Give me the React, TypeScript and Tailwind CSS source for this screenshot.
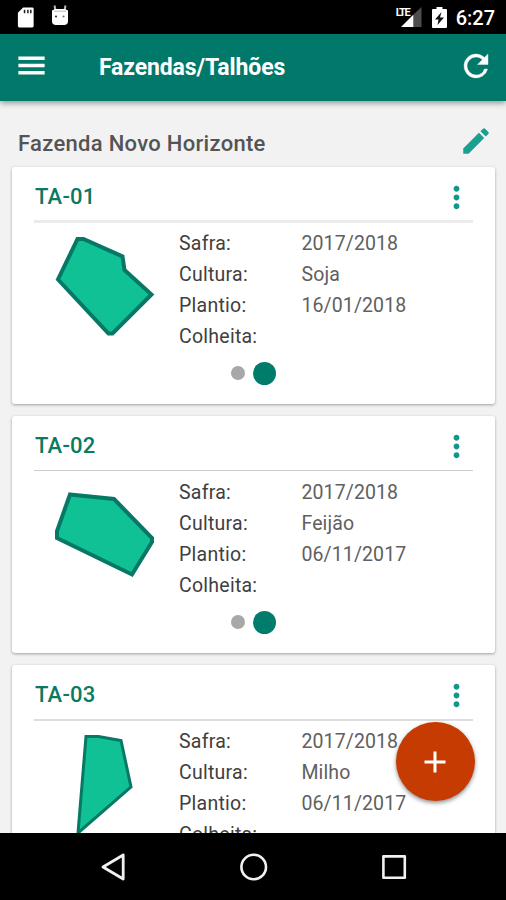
import { MdAdd, MdEdit, MdMoreVert } from 'react-icons/md';

interface Field {
  name: string;
  crop: string;
  planted: string;
  shape: string;
  strokeWidth: number;
  divider: string;
}

const fields: Field[] = [
  {
    name: 'TA-01',
    crop: 'Soja',
    planted: '16/01/2018',
    shape: '43.5,16 49.5,16 88.5,33.5 90.5,47 117.5,71.5 78.5,110.5 74.5,110.5 24,56.5',
    strokeWidth: 4,
    divider: 'h-[3px] bg-[#ebebeb]'
  },
  {
    name: 'TA-02',
    crop: 'Feijão',
    planted: '06/11/2017',
    shape: '36,22.5 80,27 118,66 118,70 98,102.5 23,66 23,59',
    strokeWidth: 4,
    divider: 'mt-px mb-px h-px bg-[#cdcdcd]'
  },
  {
    name: 'TA-03',
    crop: 'Milho',
    planted: '06/11/2017',
    shape: '52,15.5 64.5,15.5 87,19.5 97,66 44,112',
    strokeWidth: 3,
    divider: 'mt-px h-0.5 bg-[#dedede]'
  }
];

function StatusBar() {
  return (
    <div className="flex h-[34px] shrink-0 items-center bg-black pl-[17px] pr-[11px] text-white">
      <svg className="mt-px" width="18" height="21" viewBox="0 0 18 22">
        <path d="M6 .5h9.5a1.5 1.5 0 0 1 1.5 1.5v18a1.5 1.5 0 0 1-1.5 1.5H2A1.5 1.5 0 0 1 .5 20V6z" fill="#fff" />
        <path d="M7.5 3v3.5M11 3v3.5M14 3v3.5" stroke="#222" strokeWidth="1.6" />
      </svg>
      <svg className="-mt-[3px] ml-4" width="18" height="21" viewBox="0 0 18 21">
        <path d="M3.5 0.5l1 5M14.5 .5l-1 5" stroke="#bbb" strokeWidth="2" />
        <path d="M1 5.5L4 4h10l3 1.5V16a4 4 0 0 1-4 4H5a4 4 0 0 1-4-4z" fill="#fff" />
        <path d="M3 6.2h12" stroke="#bbb" strokeWidth="1" />
        <circle cx="5" cy="11.5" r="1.1" fill="#333" />
        <circle cx="12.5" cy="11.5" r="1.1" fill="#777" />
      </svg>
      <div className="flex-1" />
      <div className="relative h-5 w-[27px]">
        <svg className="absolute bottom-0 right-0" width="22" height="20" viewBox="0 0 22 20">
          <path d="M14 7L21.5 0v20H14z" fill="#4d4d4d" />
          <path d="M1 20L13.5 7.5V20z" fill="#fff" />
        </svg>
        <span className="absolute left-px top-px text-[11px] font-bold leading-[9px] tracking-[-1.3px]">LTE</span>
      </div>
      <svg className="ml-2.5" width="15" height="21" viewBox="0 0 15 21">
        <path d="M4.5 0h6v2H14a1 1 0 0 1 1 1v17a1 1 0 0 1-1 1H1a1 1 0 0 1-1-1V3a1 1 0 0 1 1-1h3.5z" fill="#fff" />
        <path d="M9.5 5L3 12.5h3.5L5.5 18l6.5-7.5H8z" fill="#111" />
      </svg>
      <span className="ml-[9px] mt-0.5 text-[20px] font-medium">6:27</span>
    </div>
  );
}

function AppBar() {
  return (
    <header className="z-10 flex h-[67px] shrink-0 items-center bg-[#00796b] pb-1 pl-[14px] pr-[12px] text-white shadow-[0_2px_6px_rgba(0,0,0,0.4)]">
      <svg width="35" height="35" viewBox="0 0 24 24" fill="none" stroke="currentColor" strokeWidth="2.3">
        <path d="M3 7h18M3 12h18M3 17h18" />
      </svg>
      <h1 className="ml-[50px] mt-1.5 flex-1 text-[23px] font-bold tracking-[-0.12px]">Fazendas/Talhões</h1>
      <svg width="36" height="36" viewBox="0 0 24 24" fill="currentColor" stroke="currentColor" strokeWidth="0.25">
        <path d="M17.65 6.35A7.958 7.958 0 0 0 12 4a8 8 0 1 0 7.73 10h-2.08A5.99 5.99 0 0 1 12 18a6 6 0 1 1 0-12c1.66 0 3.14.69 4.22 1.78L13 11h7V4z" />
      </svg>
    </header>
  );
}

function FieldCard({ field }: { field: Field }) {
  const rows = [
    { label: 'Safra:', value: '2017/2018' },
    { label: 'Cultura:', value: field.crop },
    { label: 'Plantio:', value: field.planted },
    { label: 'Colheita:', value: '' }
  ];

  return (
    <article className="h-[237px] shrink-0 rounded-[3px] bg-white px-[22px] shadow-[0_1px_3px_rgba(0,0,0,0.35)]">
      <div className="flex h-[53px] items-center justify-between pt-[7px]">
        <h3 className="-mt-px ml-px text-[22px] font-medium tracking-[0.2px] text-[#0b7a62]">{field.name}</h3>
        <MdMoreVert size={35} className="-mr-px text-[#12988a]" />
      </div>
      <div className={field.divider} />

      <div className="flex">
        <svg className="mt-0.5 h-[118px] w-[145px]" viewBox="0 2 145 118">
          <polygon points={field.shape} fill="#10c196" stroke="#067865" strokeWidth={field.strokeWidth} />
        </svg>
        <dl className="pt-[4.5px] text-[19.5px] leading-[31px]">
          {rows.map((row) => (
            <div key={row.label} className="flex">
              <dt className="w-[122.5px] tracking-[0.25px] text-[#404040]">{row.label}</dt>
              <dd className="tracking-[0.1px] text-[#606060]">{row.value}</dd>
            </div>
          ))}
        </dl>
      </div>

      {/* Pager */}
      <div className="mt-2.5 flex items-center justify-center gap-2">
        <span className="size-[14px] rounded-full bg-[#a8a8a8]" />
        <span className="size-[23px] rounded-full bg-[#007c6c]" />
      </div>
    </article>
  );
}

function NavigationBar() {
  return (
    <nav className="flex h-[67px] shrink-0 items-center bg-black pl-[99px]">
      <svg width="28" height="30" viewBox="0 0 28 30" fill="none" stroke="#f1f1f1" strokeWidth="2.8" strokeLinejoin="round">
        <path d="M24.2 3L4 15l20.2 12z" />
      </svg>
      <svg className="ml-[112px]" width="30" height="30" viewBox="0 0 30 30" fill="none" stroke="#f1f1f1" strokeWidth="2.6">
        <circle cx="14.7" cy="15" r="12.3" />
      </svg>
      <svg className="ml-[110px]" width="30" height="30" viewBox="0 0 30 30" fill="none" stroke="#f1f1f1" strokeWidth="2.6" strokeLinejoin="round">
        <rect x="4.4" y="4.4" width="21.4" height="21.4" />
      </svg>
    </nav>
  );
}

export default function App() {
  return (
    <div className="relative flex h-[900px] w-[506px] flex-col overflow-hidden bg-[#f2f2f2] font-['Roboto',sans-serif]">
      <StatusBar />
      <AppBar />

      <main className="flex min-h-0 flex-1 flex-col overflow-hidden pl-3 pr-[11px]">
        <div className="flex h-[66px] shrink-0 items-center justify-between pl-1.5 pr-0.5 pt-[15px]">
          <h2 className="mt-[3px] text-[22px] font-medium tracking-[0.3px] text-[#545454]">Fazenda Novo Horizonte</h2>
          <MdEdit size={34} className="-mt-px text-[#1aa090]" />
        </div>
        <div className="flex flex-col gap-3">
          {fields.map((field) => (
            <FieldCard key={field.name} field={field} />
          ))}
        </div>
      </main>

      <NavigationBar />

      <button className="absolute bottom-[99px] right-[31px] z-20 flex size-[79px] items-center justify-center rounded-full bg-[#c63b02] pr-0.5 text-white shadow-[0_2px_4px_rgba(0,0,0,0.45)]">
        <MdAdd size={36} />
      </button>
    </div>
  );
}
